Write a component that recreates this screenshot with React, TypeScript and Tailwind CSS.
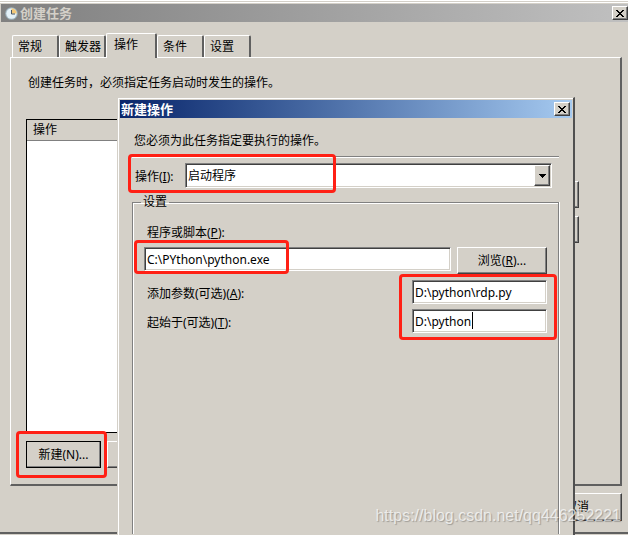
import type { InputHTMLAttributes, ReactNode } from 'react';

const tabs = ['常规', '触发器', '操作', '条件', '设置'];

const raised =
  'border border-t-white border-l-white border-r-[#404040] border-b-[#404040] bg-[#d4d0c8] shadow-[inset_-1px_-1px_0_#808080]';

const sunken =
  'border border-t-[#808080] border-l-[#808080] border-r-white border-b-white bg-white shadow-[inset_1px_1px_0_#404040,inset_-1px_-1px_0_#d4d0c8]';

// Red marker box drawn around its parent
const Highlight = ({ className }: { className: string }) => (
  <span
    className={`pointer-events-none absolute z-10 rounded border-3 border-[#ff2015] ${className}`}
  />
);

const CloseButton = () => (
  <button
    type="button"
    aria-label="关闭"
    className={`flex h-[14px] w-4 items-center justify-center ${raised}`}
  >
    <svg width="8" height="7" viewBox="0 0 8 7" shapeRendering="crispEdges">
      <path
        d="M0 0h2v1H0zM6 0h2v1H6zM1 1h2v1H1zM5 1h2v1H5zM2 2h4v1H2zM3 3h2v1H3zM2 4h4v1H2zM1 5h2v1H1zM5 5h2v1H5zM0 6h2v1H0zM6 6h2v1H6z"
        fill="#000"
      />
    </svg>
  </button>
);

interface ButtonProps {
  children?: ReactNode;
  className?: string;
  label?: string;
}

const Button = ({ children, className = '', label }: ButtonProps) => (
  <button type="button" aria-label={label} className={`text-center ${raised} ${className}`}>
    {children}
  </button>
);

const TextField = (props: InputHTMLAttributes<HTMLInputElement>) => (
  <input
    type="text"
    {...props}
    className={`block h-6 w-full px-[2px] outline-none ${sunken}`}
  />
);

const ClockIcon = () => (
  <svg width="13" height="13" viewBox="0 0 13 13">
    <circle cx="6.5" cy="6.5" r="6.3" fill="#9fb3bd" />
    <circle cx="6.5" cy="6.5" r="5.2" fill="#e4f1f8" />
    <path d="M6.5 6.5V1.3a5.2 5.2 0 0 1 5.2 5.2z" fill="#f3c878" />
    <path d="M6.5 3v4h3.5" fill="none" stroke="#4a5660" />
  </svg>
);

const NewActionDialog = () => (
  <section
    role="dialog"
    aria-label="新建操作"
    className="absolute top-[97px] right-[53px] bottom-0 left-[117px] flex flex-col border-t border-r-2 border-l border-t-[#d4d0c8] border-r-[#505050] border-l-[#d4d0c8] bg-[#d4d0c8]"
  >
    <div className="flex flex-1 flex-col border-t border-l border-white p-px">
      <header className="flex h-[18px] items-center justify-between bg-linear-to-r from-[#0a246a] to-[#a6caf0] pr-[2px] pl-px">
        <h2 className="text-[13px] leading-4 font-bold text-white">新建操作</h2>
        <CloseButton />
      </header>

      <div className="flex flex-1 flex-col pt-[15px] pr-[13px] pl-3">
        <p className="pl-[2px] leading-4">您必须为此任务指定要执行的操作。</p>
        <hr className="mt-[7px] h-[2px] border-0 border-t border-b border-t-[#808080] border-b-white" />

        <div className="relative mt-[5px] mr-[7px] flex items-center pl-[3px]">
          <label htmlFor="action" className="w-[50px] pt-[2px]">
            操作(<u>I</u>):
          </label>
          <div className={`relative flex-1 ${sunken}`}>
            <select
              id="action"
              defaultValue="启动程序"
              className="block h-[23px] w-full appearance-none bg-transparent pl-[2px] outline-none"
            >
              <option>启动程序</option>
            </select>
            <span
              className={`pointer-events-none absolute top-px right-px bottom-px flex w-4 items-center justify-center ${raised}`}
            >
              <svg width="7" height="4" viewBox="0 0 7 4" shapeRendering="crispEdges">
                <path d="M0 0h7v1H0zM1 1h5v1H1zM2 2h3v1H2zM3 3h1v1H3z" fill="#000" />
              </svg>
            </span>
          </div>
          <Highlight className="-top-[9px] -bottom-[5px] -left-1 w-[208px]" />
        </div>

        <fieldset className="mt-[6px] flex-1 border border-b-0 border-[#808080] px-[11px] shadow-[inset_1px_1px_0_#fff,1px_0_0_#fff]">
          <legend className="-ml-[3px] px-[2px] leading-4">设置</legend>
          <label htmlFor="program" className="mt-[15px] block pl-[3px] leading-4">
            程序或脚本(<u>P</u>):
          </label>
          <div className="mt-[6px] flex items-start gap-[6px]">
            <div className="relative flex-1">
              <TextField id="program" defaultValue="C:\PYthon\python.exe" />
              <Highlight className="-top-[7px] -bottom-[3px] -left-[10px] w-[155px]" />
            </div>
            <Button className="h-[27px] w-[90px]">
              浏览(<u>R</u>)...
            </Button>
          </div>

          <div className="relative mt-[6px] flex flex-col gap-[5px]">
            <div className="flex items-center justify-between pl-[3px]">
              <label htmlFor="args" className="pt-1">
                添加参数(可选)(<u>A</u>):
              </label>
              <div className="w-[135px]">
                <TextField id="args" defaultValue="D:\python\rdp.py" />
              </div>
            </div>
            <div className="flex items-center justify-between pl-[3px]">
              <label htmlFor="start-in" className="pt-1">
                起始于(可选)(<u>T</u>):
              </label>
              <div className="relative w-[135px]">
                <TextField id="start-in" defaultValue="D:\python" />
                <span className="absolute top-[3px] left-[60px] h-[17px] w-px bg-black" />
              </div>
            </div>
            <Highlight className="-top-[6px] -right-[10px] -bottom-[7px] w-[158px]" />
          </div>
        </fieldset>
      </div>
    </div>
  </section>
);

const App = () => (
  <main
    className="relative flex min-h-screen flex-col overflow-hidden bg-[#d4d0c8] pb-px text-[12px] leading-4 text-black"
    style={{ fontFamily: '"Noto Sans", "Noto Sans CJK SC", sans-serif' }}
  >
    <div className="flex flex-1 flex-col border-t border-b-2 border-t-white border-b-[#606060] pt-px">
      <div className="flex flex-1 flex-col border-t border-white pt-px pl-px">
        <header className="flex h-[18px] items-center gap-[2px] bg-linear-to-r from-[#808080] to-[#c0c0c0] pl-1">
          <ClockIcon />
          <h1 className="flex-1 text-[13px] leading-4 font-bold text-[#d4d0c8]">创建任务</h1>
          <CloseButton />
        </header>

        <div className="flex flex-1 flex-col pt-[11px] pr-[6px] pl-[9px]">
          <nav role="tablist" className="flex h-6 items-end pl-[2px]">
            {tabs.map((tab) => {
              const active = tab === '操作';
              return (
                <button
                  key={tab}
                  type="button"
                  role="tab"
                  aria-selected={active}
                  className={`rounded-t-[2px] border-t border-r-2 border-l border-t-white border-r-[#606060] border-l-white text-left ${
                    active
                      ? 'relative -mb-px h-[25px] w-[51px] bg-[#d4d0c8] pb-[2px] pl-[7px]'
                      : 'h-[22px] w-[47px] pl-[5px]'
                  }`}
                >
                  <span className="whitespace-nowrap">{tab}</span>
                </button>
              );
            })}
          </nav>

          <div className="flex flex-1 flex-col border-t border-r-2 border-b-2 border-l border-t-white border-r-[#606060] border-b-[#606060] border-l-white pt-[17px] pr-4 pl-[15px]">
            <p className="pl-[2px]">创建任务时，必须指定任务启动时发生的操作。</p>
            <div className="mt-7 flex flex-1 gap-2">
              <div className="flex-1 border border-black bg-white">
                <table className="w-full">
                  <thead>
                    <tr className="h-5 border-b border-[#808080] bg-[#d4d0c8]">
                      <th className="pt-px pl-[6px] text-left font-normal">操作</th>
                    </tr>
                  </thead>
                  <tbody />
                </table>
              </div>
              <div className="flex flex-col gap-2 pt-[62px] pr-[25px]">
                <Button className="h-[27px] w-6" label="上移" />
                <Button className="h-[27px] w-6" label="下移" />
              </div>
            </div>
            <div className="mt-2 mb-4 flex gap-[6px]">
              <div className="relative">
                <Button className="h-[27px] w-[75px] outline-1 -outline-offset-1 outline-black">
                  新建(N)...
                </Button>
                <Highlight className="-top-[10px] -right-[6px] -bottom-[10px] -left-[10px]" />
              </div>
              <Button className="h-[27px] w-[75px]">编辑(E)...</Button>
            </div>
          </div>

          <footer className="mt-[7px] mb-[11px] flex justify-end">
            <Button className="h-7 w-[90px]">取消</Button>
          </footer>
        </div>
      </div>
    </div>

    <NewActionDialog />

    <p className="pointer-events-none absolute right-[7px] bottom-[9px] z-20 font-['Liberation_Sans',sans-serif] text-base leading-5 text-white/70 [text-shadow:1px_1px_1px_#00000040]">
      https://blog.csdn.net/qq446252221
    </p>
  </main>
);

export default App;
